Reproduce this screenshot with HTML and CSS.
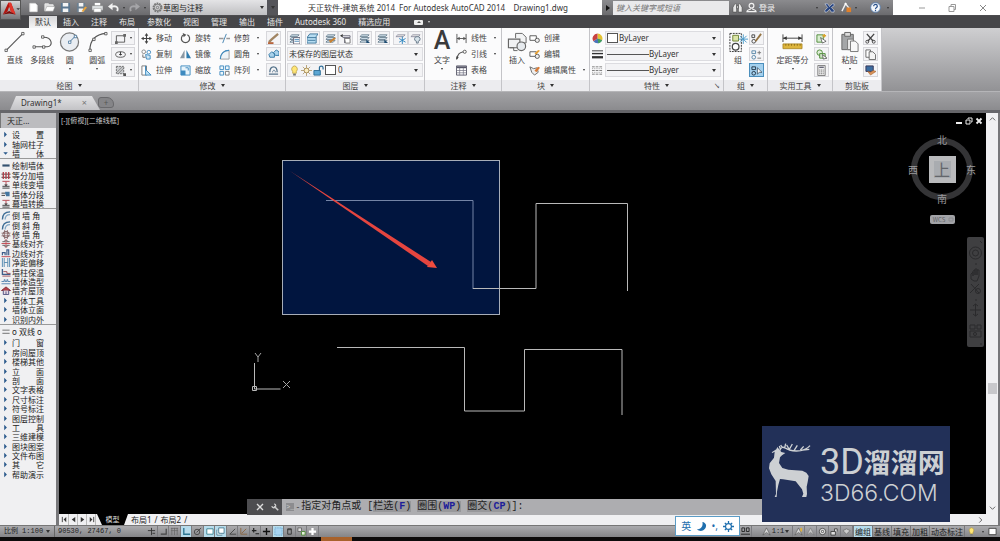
FILE: index.html
```
<!DOCTYPE html>
<html lang="zh-CN">

<head>
    <meta charset="UTF-8">
    <meta name="viewport" content="width=device-width, initial-scale=1.0">
    <title>天正软件-建筑系统 2014 For Autodesk AutoCAD 2014</title>
    <link rel="stylesheet" href="styles.css">
</head>

<body>
    <!-- Shared icons -->
    <svg class="sprite" aria-hidden="true">
        <symbol id="i-new" viewBox="0 0 12 12"><path d="M2 1.500h6l2 2v7H2z" fill="#fff" stroke="#ddd"/></symbol>
        <symbol id="i-open" viewBox="0 0 12 12"><path d="M1 10V2h4l1 1h4v2" fill="#ddd" stroke="#eee"/><path d="M1 10l2-5h9l-2 5z" fill="#fff" stroke="#888" stroke-width=".5"/></symbol>
        <symbol id="i-save" viewBox="0 0 12 12"><path d="M1 1h10v10H1z" fill="#5b7790"/><path d="M3 1h6v4H3zM3 7h6v4H3z" fill="#f4f4f4"/></symbol>
        <symbol id="i-saveas" viewBox="0 0 12 12"><path d="M1 1h9v10H1z" fill="#6b7f90"/><path d="M3 1h5v4H3zM3 7h5v4H3z" fill="#f4f4f4"/><path d="M6 10l4-5 2 1-4 5z" fill="#e8a33c"/></symbol>
        <symbol id="i-print" viewBox="0 0 12 12"><path d="M3 1h6v3H3z" fill="#fff"/><path d="M0 4h12v5H0z" fill="#dfe2e4" stroke="#777" stroke-width=".5"/><path d="M2 7h8v4H2z" fill="#fff" stroke="#888" stroke-width=".5"/></symbol>
        <symbol id="i-undo" viewBox="0 0 12 12"><path d="M10 10c2-5-2-6-6-5" fill="none" stroke="#f2f2f2" stroke-width="2"/><path d="M0 5l5-4v8z" fill="#f2f2f2"/></symbol>
        <symbol id="i-redo" viewBox="0 0 12 12"><path d="M2 10c-2-5 2-6 6-5" fill="none" stroke="#a5a5a8" stroke-width="2"/><path d="M12 5L7 1v8z" fill="#a5a5a8"/></symbol>
        <symbol id="i-gear" viewBox="0 0 12 12"><circle cx="6" cy="6" r="4.500" fill="none" stroke="#777" stroke-width="1.800" stroke-dasharray="2 .8"/><circle cx="6" cy="6" r="3.500" fill="none" stroke="#777"/><circle cx="6" cy="6" r="1.300" fill="none" stroke="#777"/></symbol>
        <symbol id="i-find" viewBox="0 0 12 12"><path d="M1 11V6l2-4h2v9zM7 11V2h2l2 4v5zM5 4h2v3H5z" fill="#e8e8e8" stroke="#444" stroke-width=".6"/></symbol>
        <symbol id="i-user" viewBox="0 0 12 12"><circle cx="6" cy="4" r="2.600" fill="none" stroke="#f2f2f2" stroke-width="1.300"/><path d="M5 7c0 2-4 1-4 3.500h10C11 8 7 9 7 7" fill="none" stroke="#f2f2f2" stroke-width="1.300"/></symbol>
        <symbol id="i-exchange" viewBox="0 0 12 12"><path d="M1 2h3l2 3 3-3h2v2L8 6l3 3v2H8L6 8l-3 3H1V9l3-3z" fill="#26437f" stroke="#e7ebf5" stroke-width=".6"/></symbol>
        <symbol id="i-a360" viewBox="0 0 12 12"><path d="M1 10L5 2l4 5" fill="none" stroke="#f0f0f0" stroke-width="1.500"/><circle cx="5" cy="2" r="1.200" fill="#fff"/><path d="M6 6h5v5H6z" fill="#e0802a"/></symbol>
        <symbol id="i-help" viewBox="0 0 12 12"><circle cx="6" cy="6" r="5.300" fill="#f3f6fa" stroke="#5a7fae"/><path d="M4 4.500c0-2.500 4-2.500 4 0 0 1.500-2 1.300-2 3M6 8.500V10" fill="none" stroke="#274f8a" stroke-width="1.300"/></symbol>

        <symbol id="i-line" viewBox="0 0 22 22"><path d="M2 20L20 2" stroke="#555" stroke-width="1.200"/><path d="M1 18.500h2.500V21H1zM18.500 1H21v2.500h-2.500z" fill="#fff" stroke="#444" stroke-width=".8"/></symbol>
        <symbol id="i-pline" viewBox="0 0 22 22"><path d="M2 16h14c6 0 6-10-4-10" fill="none" stroke="#555" stroke-width="1.200"/><path d="M1 15h2.500v2.500H1zM11 15h2.500v2.500H11zM10 4.500h2.500V7H10z" fill="#fff" stroke="#444" stroke-width=".8"/></symbol>
        <symbol id="i-circle" viewBox="0 0 22 22"><circle cx="11" cy="11" r="9.500" fill="#e9edf2" stroke="#777" stroke-width="1.300"/><path d="M11 11l6-6" stroke="#3c6d96"/><path d="M10 10h2.500v2.500H10zM16 4h2.500v2.500H16z" fill="#fff" stroke="#3c6d96" stroke-width=".8"/></symbol>
        <symbol id="i-arc" viewBox="0 0 22 22"><path d="M3 20C3 9 9 3 20 2" fill="none" stroke="#555" stroke-width="1.200"/><path d="M2 18.500h2.500V21H2zM6 7h2.500v2.500H6zM18.500 1H21v2.500h-2.500z" fill="#fff" stroke="#444" stroke-width=".8"/></symbol>
        <symbol id="i-rect" viewBox="0 0 12 12"><path d="M1.500 3h9v7h-9z" fill="none" stroke="#555"/><path d="M0 9h3v3H0zM9 1h3v3H9z" fill="#666"/></symbol>
        <symbol id="i-ellipse" viewBox="0 0 12 12"><ellipse cx="6" cy="6" rx="5.300" ry="3" fill="none" stroke="#555"/><path d="M6 3v4M4.500 6h3" stroke="#333"/></symbol>
        <symbol id="i-hatch" viewBox="0 0 12 12"><path d="M1.500 1.500h8v8h-8z" fill="#c7c9cc" stroke="#666" stroke-dasharray="2 1"/><path d="M2 8l6-6M4 9l6-6" stroke="#777" stroke-width=".8"/><path d="M9 9h3v3H9z" fill="#555"/></symbol>
        <symbol id="i-move" viewBox="0 0 12 12"><path d="M6 2v8M2 6h8" stroke="#444" stroke-width="1.200"/><path d="M6 0l2 3H4zM6 12l2-3H4zM0 6l3-2v4zM12 6L9 4v4z" fill="#444"/></symbol>
        <symbol id="i-copy" viewBox="0 0 12 12"><circle cx="3" cy="3" r="2" fill="none" stroke="#888"/><circle cx="8.500" cy="3.500" r="2" fill="none" stroke="#3d8ac0"/><path d="M5 6l5 1v4H6z" fill="#cfe6f5" stroke="#3d8ac0"/><path d="M2 6v3h3" stroke="#666" fill="none"/></symbol>
        <symbol id="i-stretch" viewBox="0 0 12 12"><path d="M1 1h5v10H1z" fill="#fff" stroke="#777"/><path d="M5 1v4l6 6H5z" fill="#bfe0f3" stroke="#3d8ac0"/></symbol>
        <symbol id="i-rotate" viewBox="0 0 12 12"><path d="M4 2a4.500 4.500 0 1 0 4 0" fill="none" stroke="#555" stroke-width="1.300"/><path d="M3 0l4 2-3 2.500z" fill="#555"/></symbol>
        <symbol id="i-mirror" viewBox="0 0 12 12"><path d="M5 1v9H0z" fill="#8a98a3"/><path d="M7 1v9h5z" fill="#2f7caf"/></symbol>
        <symbol id="i-scale" viewBox="0 0 12 12"><path d="M1 1h10v10H1z" fill="#e8f4fb" stroke="#3d8ac0"/><path d="M1 6h5v5H1z" fill="#3d8ac0"/><path d="M6 3h3v3" fill="none" stroke="#3d8ac0"/></symbol>
        <symbol id="i-trim" viewBox="0 0 12 12"><path d="M4 11L8 1" stroke="#3d7fae"/><path d="M0 6h5M8 6h4" stroke="#999" stroke-width="1.500"/></symbol>
        <symbol id="i-fillet" viewBox="0 0 12 12"><path d="M1.500 11c0-6 4-9.500 9.500-9.500V11z" fill="#eef3f7" stroke="#999"/><path d="M1.500 11c0-6 4-9.500 9.500-9.500" fill="none" stroke="#3d8ac0" stroke-width="1.300"/></symbol>
        <symbol id="i-array" viewBox="0 0 12 12"><path d="M1 1h4v4H1zM7 1h4v4H7zM1 7h4v4H1z" fill="#eef6fb" stroke="#3d8ac0"/><path d="M7 7h4v4H7z" fill="#fff" stroke="#777"/></symbol>
        <symbol id="i-erase" viewBox="0 0 12 12"><path d="M1 10l3-3 7-6" stroke="#a08462" stroke-width="2.500"/><path d="M0 11h6" stroke="#b7643c" stroke-width="2"/></symbol>
        <symbol id="i-explode" viewBox="0 0 12 12"><path d="M1 6l3-3 3 2v4H2zM6 4l3-3 3 2v4H8z" fill="#a9d2eb" stroke="#3278a5"/></symbol>
        <symbol id="i-offset" viewBox="0 0 12 12"><path d="M1 10h10M2 8c0-8 8-8 8 0" fill="none" stroke="#54728a" stroke-width="1.400"/><path d="M5 8c0-3 3-3 3 0" fill="none" stroke="#54728a"/></symbol>
        <symbol id="i-layer" viewBox="0 0 12 12"><path d="M3 2h8l-2 2H1zM3 5h8L9 7H1zM3 8h8l-2 2H1z" fill="#dcebf5" stroke="#5e7486" stroke-width=".9"/></symbol>
        <symbol id="i-layer-list" viewBox="0 0 12 12"><use href="#i-layer"/><path d="M5 5h7v7H5z" fill="#fff" stroke="#667"/><path d="M6 7h5M6 9h5" stroke="#4787b5"/></symbol>
        <symbol id="i-layer-blue" viewBox="0 0 12 12"><path d="M3 1h9l-2 3v7H0V5z" fill="#b6dcf1" stroke="#3d759a"/><path d="M0 5h10M1 8h8" stroke="#3d759a"/></symbol>
        <symbol id="i-layer-edit" viewBox="0 0 12 12"><use href="#i-layer"/><path d="M4 8l2 3 6-5-2-1-4 3z" fill="#c98232"/></symbol>
        <symbol id="i-layer-prev" viewBox="0 0 12 12"><path d="M3 3h8v2H3M5 5v6" fill="none" stroke="#667"/><path d="M5 6h6v5H6z" fill="#fff" stroke="#777"/><path d="M0 3l3-2v4z" fill="#333"/></symbol>
        <symbol id="i-layer-arrow" viewBox="0 0 12 12"><use href="#i-layer"/><path d="M8 7l4 4H8z" fill="#1f4d73"/></symbol>
        <symbol id="i-layer-freeze" viewBox="0 0 12 12"><path d="M3 2h8L9 4H1z" fill="#eee" stroke="#889" stroke-width=".9"/><path d="M8 4v8M4.500 6l7 4M11.500 6l-7 4" stroke="#2c83bd"/></symbol>
        <symbol id="i-layer-off" viewBox="0 0 12 12"><path d="M3 2h8L9 4H1z" fill="#eee" stroke="#889" stroke-width=".9"/><path d="M8 4a2.500 2.500 0 0 0-1 5v2h2V9a2.500 2.500 0 0 0-1-5z" fill="#d7e3ea" stroke="#678"/></symbol>
        <symbol id="i-bulb" viewBox="0 0 12 12"><path d="M6 1a3.500 3.500 0 0 0-2 6v2h4V7a3.500 3.500 0 0 0-2-6z" fill="#ffe676" stroke="#b59a3c" stroke-width=".8"/><path d="M4.500 9.500h3v2h-3z" fill="#777"/></symbol>
        <symbol id="i-sun" viewBox="0 0 12 12"><path d="M6 0v12M0 6h12M2 2l8 8M10 2l-8 8" stroke="#a58a55" stroke-width=".8"/><circle cx="6" cy="6" r="2.600" fill="#fbeec0" stroke="#a58a55"/></symbol>
        <symbol id="i-lock" viewBox="0 0 12 12"><path d="M1 6h7v5H1z" fill="#5ca7d4" stroke="#2d6d97"/><path d="M7 6V3c0-2.500 4-2.500 4 0v2" fill="none" stroke="#2d6d97" stroke-width="1.300"/></symbol>
        <symbol id="i-dim" viewBox="0 0 12 12"><path d="M1 1v10M11 1v10M1 6h10" stroke="#555"/><path d="M1 6l3-2v4zM11 6L8 4v4z" fill="#555"/></symbol>
        <symbol id="i-leader" viewBox="0 0 12 12"><path d="M1 11c1-6 3-7 7-8" fill="none" stroke="#555" stroke-width="1.200"/><circle cx="9.500" cy="3" r="1.700" fill="#fff" stroke="#555"/><path d="M0 12l.500-4L3 9z" fill="#444"/></symbol>
        <symbol id="i-table" viewBox="0 0 12 12"><path d="M.500 1h11v10H.500z" fill="#fff" stroke="#556"/><path d="M1 2.500h10" stroke="#556" stroke-width="2"/><path d="M4 3v8M8 3v8M1 6h10M1 8.500h10" stroke="#778" stroke-width=".8"/></symbol>
        <symbol id="i-insert" viewBox="0 0 22 22"><path d="M9 7V2h7l4 4v6h-4" fill="#f3f4f5" stroke="#666"/><path d="M1.500 8h12v9h-12z" fill="#f0f1f3" stroke="#666" stroke-width="1.200"/><circle cx="15" cy="15.500" r="4.500" fill="#e6eaee" stroke="#666" stroke-width="1.200"/><path d="M7 17v3h4M3 17h4" fill="none" stroke="#666"/></symbol>
        <symbol id="i-blk" viewBox="0 0 12 12"><path d="M1 3h7v5H1z" fill="#fff" stroke="#555"/><circle cx="9" cy="8" r="2.300" fill="#eee" stroke="#555"/></symbol>
        <symbol id="i-blk-edit" viewBox="0 0 12 12"><use href="#i-blk"/><path d="M6 5l4-4 2 1-4 4z" fill="#e69f32"/></symbol>
        <symbol id="i-blk-attr" viewBox="0 0 12 12"><path d="M1 2l4 2 4-1 1 5-4 3-3-3z" fill="#eee" stroke="#666"/><path d="M6 6l4-4 2 1-4 5z" fill="#d87a35"/></symbol>
        <symbol id="i-color" viewBox="0 0 12 12"><path d="M6 6V.500A5.500 5.500 0 0 1 11 8z" fill="#e3c231"/><path d="M6 6l5 2A5.500 5.500 0 0 1 1.500 9z" fill="#4b73ba"/><path d="M6 6L1.500 9A5.500 5.500 0 0 1 6 .5z" fill="#c74141"/><path d="M6 6l5 2a5 5 0 0 1-4 3.500z" fill="#43a15b"/></symbol>
        <symbol id="i-weight" viewBox="0 0 12 12"><path d="M0 2h12" stroke="#333"/><path d="M0 5h12" stroke="#333" stroke-width="1.500"/><path d="M0 9h12" stroke="#333" stroke-width="2.500"/></symbol>
        <symbol id="i-ltype" viewBox="0 0 12 12"><path d="M0 2h12M0 6h12M0 10h12" stroke="#777" stroke-dasharray="3 1"/><path d="M0 4h12M0 8h12" stroke="#999" stroke-dasharray="1 1"/></symbol>
        <symbol id="i-group" viewBox="0 0 22 22"><path d="M2 2h12v19H2z" fill="none" stroke="#333" stroke-dasharray="2 1"/><path d="M5 4h6v6H5z" fill="#dbe5a8" stroke="#708436"/><circle cx="8" cy="16" r="3.500" fill="#fff" stroke="#444" stroke-width="1.300"/><path d="M16 3v10M11 8h10M12.500 4.500l7 7M19.500 4.500l-7 7" stroke="#4b9ac9"/></symbol>
        <symbol id="i-grp-a" viewBox="0 0 12 12"><path d="M1 2h3v3H1z" fill="none" stroke="#444"/><circle cx="3" cy="9" r="2" fill="none" stroke="#444"/><path d="M5 9l6-8" stroke="#947443" stroke-width="2"/></symbol>
        <symbol id="i-grp-b" viewBox="0 0 12 12"><path d="M1 2h4v3H1z" fill="none" stroke="#5585a6"/><circle cx="3" cy="9" r="2" fill="none" stroke="#5585a6"/><path d="M7 4h4M9 2v4M7 10h4" stroke="#777"/></symbol>
        <symbol id="i-grp-c" viewBox="0 0 12 12"><path d="M1 2h4v3H1z" fill="none" stroke="#234"/><circle cx="3" cy="9" r="2" fill="none" stroke="#234"/><path d="M7 3v7l2-2h3z" fill="#fff" stroke="#234" stroke-width=".7"/></symbol>
        <symbol id="i-measure" viewBox="0 0 22 22"><path d="M1 3v8M21 3v8M1 7h20" stroke="#444"/><path d="M1 7l4-2v4zM21 7l-4-2v4z" fill="#333"/><path d="M1 13h20v5H1z" fill="#ddb53d" stroke="#a47f1c" stroke-width=".8"/><path d="M4 13v2M7 13v2M10 13v2M13 13v2M16 13v2M19 13v2" stroke="#76590d" stroke-width=".7"/></symbol>
        <symbol id="i-pick" viewBox="0 0 12 12"><path d="M1 2h7v8H1z" fill="#d8edcf" stroke="#4d8a37"/><path d="M5 5l6 4-4 2z" fill="#fff" stroke="#333" stroke-width=".7"/><path d="M9 1v4M7 3h4" stroke="#dca32c" stroke-width="1.500"/></symbol>
        <symbol id="i-pick2" viewBox="0 0 12 12"><circle cx="4" cy="4" r="3" fill="#ddecd6" stroke="#4d8a37"/><path d="M4 5h6v5H4z" fill="#cfe5c5" stroke="#4d8a37"/><path d="M7 6l5 4-4 1z" fill="#fff" stroke="#333" stroke-width=".7"/></symbol>
        <symbol id="i-calc" viewBox="0 0 12 12"><path d="M2 .500h8v11H2z" fill="#eee" stroke="#777"/><path d="M3.500 2.500h5" stroke="#667" stroke-width="1.500"/><path d="M3.500 5.500h5M3.500 7.500h5M3.500 9.500h5" stroke="#777" stroke-dasharray="1.200 .7"/></symbol>
        <symbol id="i-paste" viewBox="0 0 22 22"><path d="M3 3h12v16H3z" fill="#a4a6a8" stroke="#666"/><path d="M6 1h6v4H6z" fill="#ddd" stroke="#666"/><path d="M9 8h6v11H9z" fill="#eee" stroke="#777"/><path d="M12 10h5l3 3v8h-8z" fill="#f8f8f8" stroke="#777"/></symbol>
        <symbol id="i-cut" viewBox="0 0 12 12"><path d="M2 1l7 8M10 1L3 9" stroke="#444" stroke-width="1.400"/><circle cx="2.500" cy="9.500" r="1.600" fill="none" stroke="#444"/><circle cx="9.500" cy="9.500" r="1.600" fill="none" stroke="#444"/></symbol>
        <symbol id="i-pages" viewBox="0 0 12 12"><path d="M1 1h5v8H1z" fill="#fff" stroke="#666"/><path d="M4.500 3h4l3 3v5.500h-7z" fill="#f4f4f4" stroke="#666"/></symbol>
        <symbol id="i-match" viewBox="0 0 12 12"><path d="M1 1h8v6H1z" fill="#3d6da0" stroke="#335"/><path d="M3 7l3 4 6-4-3-1-3 2z" fill="#d9935a" stroke="#a45d24" stroke-width=".6"/></symbol>

        <symbol id="p-tri" viewBox="0 0 10 10"><path d="M3 2l3 3-3 3z" fill="#2b5a8c"/></symbol>
        <symbol id="p-tri-down" viewBox="0 0 10 10"><path d="M2 3.500h5L4.500 6.500z" fill="#2b5a8c"/></symbol>
        <symbol id="p-wall" viewBox="0 0 10 10"><path d="M1 5h8" stroke="#33516f" stroke-width="2.400"/></symbol>
        <symbol id="p-split" viewBox="0 0 10 10"><path d="M0 3.500h10M0 7h10" stroke="#333"/><path d="M2 1v8M5 1v8M8 1v8" stroke="#b3404a" stroke-width="1.500"/></symbol>
        <symbol id="p-conv" viewBox="0 0 10 10"><path d="M1 1.500h8M5 2v4" stroke="#b3404a"/><path d="M1 7h8M1 9h8" stroke="#333"/><path d="M3 5h4L5 7z" fill="#333"/></symbol>
        <symbol id="p-seg" viewBox="0 0 10 10"><path d="M0 3.500h4M0 6h4" stroke="#333"/><path d="M4 2h5v5H5V5H4z" fill="#4577a0"/></symbol>
        <symbol id="p-arc" viewBox="0 0 10 10"><path d="M1 9.500C1 4 4 1 9.500 1" fill="none" stroke="#3f6e97" stroke-width="1.500"/><path d="M4 9.500C4 6 6 4 9.500 4" fill="none" stroke="#83a8c6" stroke-width="1.400"/></symbol>
        <symbol id="p-cross" viewBox="0 0 10 10"><circle cx="5" cy="5" r="3.500" fill="none" stroke="#7d6a6b"/><path d="M3.500 0v10M6.500 0v10M0 3.500h10M0 6.500h10" stroke="#7d5254" stroke-width=".8"/></symbol>
        <symbol id="p-base" viewBox="0 0 10 10"><path d="M0 5h10M5 0v10" stroke="#c0434c"/><path d="M1 3h3V1M6 1v2h3M1 7h3v2M6 9V7h3" fill="none" stroke="#555"/></symbol>
        <symbol id="p-edge" viewBox="0 0 10 10"><path d="M0 8.500h10" stroke="#c0434c"/><path d="M1 7V4h3v3M6 7V1h2v6" fill="none" stroke="#3f5e8a" stroke-width="1.300"/></symbol>
        <symbol id="p-dist" viewBox="0 0 10 10"><path d="M1 0v10M3 0v10M7 0v10M9 0v10M3 5h4" stroke="#4f86ae"/></symbol>
        <symbol id="p-warm" viewBox="0 0 10 10"><path d="M1 1v6h9" fill="none" stroke="#3f5e8a" stroke-width="1.500"/><path d="M2 4h4v2h4M1 9h9" fill="none" stroke="#9b4a55"/></symbol>
        <symbol id="p-shape" viewBox="0 0 10 10"><path d="M0 7.500h10M0 5h3V3h1v2h2V3h1v2h3" fill="none" stroke="#4f7fae"/></symbol>
        <symbol id="p-house" viewBox="0 0 10 10"><path d="M0 5l5-4 5 4z" fill="#b3404a" stroke="#83262f"/><path d="M2 5v4.500h6V5" fill="#e6d9e3" stroke="#4a4b7c"/><path d="M5 6v3" stroke="#4a4b7c"/></symbol>
        <symbol id="p-double" viewBox="0 0 10 10"><path d="M1 3.500h8M1 7h8" stroke="#666"/></symbol>
    </svg>

    <!-- Title bar -->
    <header class="titlebar">
        <button class="app-button" aria-label="应用程序菜单">
            <svg viewBox="0 0 22 20"><path d="M2 15L8 2h3l5 13-5-3-2-6-2 6z" fill="#b3140f"/><path d="M8 2h3l5 13-5-3z" fill="#e2362c"/><path d="M2 15l7-4 7 4-7-1z" fill="#7d0a08"/><path d="M17 8h4l-2 2z" fill="#333"/></svg>
        </button>
        <div class="quick-access">
            <button aria-label="新建"><svg><use href="#i-new"/></svg></button>
            <button aria-label="打开"><svg><use href="#i-open"/></svg></button>
            <button aria-label="保存"><svg><use href="#i-save"/></svg></button>
            <button aria-label="另存为"><svg><use href="#i-saveas"/></svg></button>
            <button aria-label="打印"><svg><use href="#i-print"/></svg></button>
            <button aria-label="放弃"><svg><use href="#i-undo"/></svg></button>
            <i class="caret small"></i>
            <button aria-label="重做"><svg><use href="#i-redo"/></svg></button>
            <i class="caret small"></i>
        </div>
        <label class="workspace-select">
            <svg><use href="#i-gear"/></svg>
            <select aria-label="工作空间">
                <option>草图与注释</option>
            </select>
            <i class="caret"></i>
        </label>
        <button class="customize" aria-label="自定义快速访问工具栏"><i class="caret"></i></button>
        <h1 class="window-title">天正软件-建筑系统 2014&nbsp; For Autodesk AutoCAD 2014 &nbsp;&nbsp; Drawing1.dwg</h1>
        <div class="infocenter">
            <i class="caret right"></i>
            <input type="text" aria-label="搜索" placeholder="键入关键字或短语">
            <button aria-label="查找"><svg><use href="#i-find"/></svg></button>
            <button class="sign-in"><svg><use href="#i-user"/></svg>登录</button>
            <span class="spacer"></span>
            <i class="caret small"></i>
            <button class="exchange" aria-label="Exchange"><svg><use href="#i-exchange"/></svg></button>
            <button aria-label="Autodesk 360"><svg><use href="#i-a360"/></svg></button>
            <i class="caret small"></i>
            <button class="help" aria-label="帮助"><svg><use href="#i-help"/></svg></button>
            <i class="caret small"></i>
        </div>
        <div class="window-controls">
            <button aria-label="最小化"><svg viewBox="0 0 8 8"><path d="M1 4h6" stroke="#999"/></svg></button>
            <button aria-label="还原"><svg viewBox="0 0 8 8"><path d="M1 2.500h5v5H1zM3 2V.500h4.500v5H6" fill="none" stroke="#999"/></svg></button>
            <button aria-label="关闭"><svg viewBox="0 0 8 8"><path d="M1 1l6 6M7 1L1 7" stroke="#888"/></svg></button>
        </div>
    </header>

    <nav class="ribbon-tabs">
        <a href="#" class="active">默认</a>
        <a href="#">插入</a>
        <a href="#">注释</a>
        <a href="#">布局</a>
        <a href="#">参数化</a>
        <a href="#">视图</a>
        <a href="#">管理</a>
        <a href="#">输出</a>
        <a href="#">插件</a>
        <a href="#">Autodesk 360</a>
        <a href="#">精选应用</a>
        <button class="ribbon-toggle" aria-label="最小化功能区"><i class="caret up"></i></button>
        <i class="caret small"></i>
    </nav>

    <!-- Ribbon -->
    <div class="ribbon">
        <section class="panel draw">
            <div class="panel-body">
                <button class="big"><svg><use href="#i-line"/></svg>直线</button>
                <button class="big"><svg><use href="#i-pline"/></svg>多段线</button>
                <button class="big"><svg><use href="#i-circle"/></svg>圆<i class="caret small"></i></button>
                <button class="big"><svg><use href="#i-arc"/></svg>圆弧<i class="caret small"></i></button>
                <div class="stack">
                    <button class="split" aria-label="矩形"><svg><use href="#i-rect"/></svg><i class="caret small"></i></button>
                    <button class="split" aria-label="椭圆"><svg><use href="#i-ellipse"/></svg><i class="caret small"></i></button>
                    <button class="split" aria-label="图案填充"><svg><use href="#i-hatch"/></svg><i class="caret small"></i></button>
                </div>
            </div>
            <h2>绘图<i class="caret"></i></h2>
        </section>

        <section class="panel modify">
            <div class="panel-body">
                <div class="stack">
                    <button class="item"><svg><use href="#i-move"/></svg>移动</button>
                    <button class="item"><svg><use href="#i-copy"/></svg>复制</button>
                    <button class="item"><svg><use href="#i-stretch"/></svg>拉伸</button>
                </div>
                <div class="stack">
                    <button class="item"><svg><use href="#i-rotate"/></svg>旋转</button>
                    <button class="item"><svg><use href="#i-mirror"/></svg>镜像</button>
                    <button class="item"><svg><use href="#i-scale"/></svg>缩放</button>
                </div>
                <div class="stack">
                    <button class="item"><svg><use href="#i-trim"/></svg>修剪<i class="caret small"></i></button>
                    <button class="item"><svg><use href="#i-fillet"/></svg>圆角<i class="caret small"></i></button>
                    <button class="item"><svg><use href="#i-array"/></svg>阵列<i class="caret small"></i></button>
                </div>
                <div class="stack">
                    <button class="tool" aria-label="删除"><svg><use href="#i-erase"/></svg></button>
                    <button class="tool" aria-label="分解"><svg><use href="#i-explode"/></svg></button>
                    <button class="tool" aria-label="偏移"><svg><use href="#i-offset"/></svg></button>
                </div>
            </div>
            <h2>修改<i class="caret"></i></h2>
        </section>

        <section class="panel layers">
            <div class="panel-body stack">
                <div class="layer-tools">
                    <button class="tool" aria-label="图层特性"><svg><use href="#i-layer-list"/></svg></button>
                    <button class="tool" aria-label="图层状态"><svg><use href="#i-layer-blue"/></svg></button>
                    <span>
                        <button class="tool" aria-label="匹配图层"><svg><use href="#i-layer-edit"/></svg></button><button class="tool" aria-label="上一个图层"><svg><use href="#i-layer-prev"/></svg></button>
                    </span>
                    <button class="tool" aria-label="隔离"><svg><use href="#i-layer-arrow"/></svg></button>
                    <button class="tool" aria-label="取消隔离"><svg><use href="#i-layer-arrow"/></svg></button>
                    <span>
                        <button class="tool" aria-label="冻结"><svg><use href="#i-layer-freeze"/></svg></button><button class="tool" aria-label="关闭图层"><svg><use href="#i-layer-off"/></svg></button>
                    </span>
                </div>
                <label class="combo">
                    <select aria-label="图层状态列表">
                        <option>未保存的图层状态</option>
                    </select>
                    <i class="caret"></i>
                </label>
                <label class="combo layer-combo">
                    <svg><use href="#i-bulb"/></svg>
                    <svg><use href="#i-sun"/></svg>
                    <svg><use href="#i-lock"/></svg>
                    <span class="swatch"></span>
                    <select aria-label="当前图层">
                        <option>0</option>
                    </select>
                    <i class="caret"></i>
                </label>
            </div>
            <h2>图层<i class="caret"></i></h2>
        </section>

        <section class="panel annotate">
            <div class="panel-body">
                <button class="big"><b class="letter-a">A</b>文字<i class="caret small"></i></button>
                <div class="stack">
                    <button class="item"><svg><use href="#i-dim"/></svg>线性<i class="caret small"></i></button>
                    <button class="item"><svg><use href="#i-leader"/></svg>引线<i class="caret small"></i></button>
                    <button class="item"><svg><use href="#i-table"/></svg>表格</button>
                </div>
            </div>
            <h2>注释<i class="caret"></i></h2>
        </section>

        <section class="panel block">
            <div class="panel-body">
                <button class="big"><svg><use href="#i-insert"/></svg>插入</button>
                <div class="stack">
                    <button class="item"><svg><use href="#i-blk"/></svg>创建</button>
                    <button class="item"><svg><use href="#i-blk-edit"/></svg>编辑</button>
                    <button class="item"><svg><use href="#i-blk-attr"/></svg>编辑属性<i class="caret small"></i></button>
                </div>
            </div>
            <h2>块<i class="caret"></i></h2>
        </section>

        <section class="panel properties">
            <div class="panel-body stack">
                <div class="prop">
                    <svg><use href="#i-color"/></svg>
                    <label class="combo"><span class="swatch"></span><select aria-label="对象颜色"><option>ByLayer</option></select><i class="caret"></i></label>
                </div>
                <div class="prop">
                    <svg><use href="#i-weight"/></svg>
                    <label class="combo"><span class="rule"></span><select aria-label="线宽"><option>ByLayer</option></select><i class="caret"></i></label>
                </div>
                <div class="prop">
                    <svg><use href="#i-ltype"/></svg>
                    <label class="combo"><span class="rule"></span><select aria-label="线型"><option>ByLayer</option></select><i class="caret"></i></label>
                </div>
            </div>
            <h2>特性<i class="caret"></i><span class="launcher">↘</span></h2>
        </section>

        <section class="panel group">
            <div class="panel-body">
                <button class="big"><svg><use href="#i-group"/></svg>组</button>
                <div class="stack">
                    <button class="tool" aria-label="编辑组"><svg><use href="#i-grp-a"/></svg></button>
                    <button class="tool" aria-label="解除编组"><svg><use href="#i-grp-b"/></svg></button>
                    <button class="tool on" aria-label="启用组选择"><svg><use href="#i-grp-c"/></svg></button>
                </div>
            </div>
            <h2>组<i class="caret"></i></h2>
        </section>

        <section class="panel utilities">
            <div class="panel-body">
                <button class="big"><svg><use href="#i-measure"/></svg>定距等分<i class="caret small"></i></button>
                <div class="stack">
                    <button class="tool" aria-label="快速选择"><svg><use href="#i-pick"/></svg></button>
                    <button class="tool" aria-label="全部选择"><svg><use href="#i-pick2"/></svg></button>
                    <button class="tool" aria-label="计算器"><svg><use href="#i-calc"/></svg></button>
                </div>
            </div>
            <h2>实用工具<i class="caret"></i></h2>
        </section>

        <section class="panel clipboard">
            <div class="panel-body">
                <button class="big"><svg><use href="#i-paste"/></svg>粘贴<i class="caret small"></i></button>
                <div class="stack">
                    <button class="tool" aria-label="剪切"><svg><use href="#i-cut"/></svg></button>
                    <button class="tool" aria-label="复制剪裁"><svg><use href="#i-pages"/></svg></button>
                    <button class="tool" aria-label="特性匹配"><svg><use href="#i-match"/></svg></button>
                </div>
            </div>
            <h2>剪贴板</h2>
        </section>
    </div>

    <div class="doc-tabs">
        <div class="doc-tab">Drawing1*<button aria-label="关闭图形">×</button></div>
        <button class="doc-new" aria-label="新图形">+</button>
    </div>

    <main class="workspace">
        <!-- Tangent tool palette -->
        <aside class="palette">
            <h2>天正...</h2>
            <ul>
                <li><svg><use href="#p-tri"/></svg><a href="#" class="wide">设 置</a></li>
                <li><svg><use href="#p-tri"/></svg><a href="#">轴网柱子</a></li>
                <li><svg><use href="#p-tri-down"/></svg><a href="#" class="wide">墙 体</a></li>
                <li class="sep"></li>
                <li><svg><use href="#p-wall"/></svg><a href="#">绘制墙体</a></li>
                <li><svg><use href="#p-split"/></svg><a href="#">等分加墙</a></li>
                <li><svg><use href="#p-conv"/></svg><a href="#">单线变墙</a></li>
                <li><svg><use href="#p-seg"/></svg><a href="#">墙体分段</a></li>
                <li><svg><use href="#p-conv"/></svg><a href="#">幕墙转换</a></li>
                <li class="sep"></li>
                <li><svg><use href="#p-arc"/></svg><a href="#">倒 墙 角</a></li>
                <li><svg><use href="#p-arc"/></svg><a href="#">倒 斜 角</a></li>
                <li><svg><use href="#p-cross"/></svg><a href="#">修 墙 角</a></li>
                <li><svg><use href="#p-base"/></svg><a href="#">基线对齐</a></li>
                <li><svg><use href="#p-edge"/></svg><a href="#">边线对齐</a></li>
                <li><svg><use href="#p-dist"/></svg><a href="#">净距偏移</a></li>
                <li><svg><use href="#p-warm"/></svg><a href="#">墙柱保温</a></li>
                <li><svg><use href="#p-shape"/></svg><a href="#">墙体造型</a></li>
                <li><svg><use href="#p-house"/></svg><a href="#">墙齐屋顶</a></li>
                <li><svg><use href="#p-tri"/></svg><a href="#">墙体工具</a></li>
                <li><svg><use href="#p-tri"/></svg><a href="#">墙体立面</a></li>
                <li><svg><use href="#p-tri"/></svg><a href="#">识别内外</a></li>
                <li class="sep"></li>
                <li><svg><use href="#p-double"/></svg><a href="#">o 双线 o</a></li>
                <li class="sep blank"></li>
                <li><svg><use href="#p-tri"/></svg><a href="#" class="wide">门 窗</a></li>
                <li><svg><use href="#p-tri"/></svg><a href="#">房间屋顶</a></li>
                <li><svg><use href="#p-tri"/></svg><a href="#">楼梯其他</a></li>
                <li><svg><use href="#p-tri"/></svg><a href="#" class="wide">立 面</a></li>
                <li><svg><use href="#p-tri"/></svg><a href="#" class="wide">剖 面</a></li>
                <li><svg><use href="#p-tri"/></svg><a href="#">文字表格</a></li>
                <li><svg><use href="#p-tri"/></svg><a href="#">尺寸标注</a></li>
                <li><svg><use href="#p-tri"/></svg><a href="#">符号标注</a></li>
                <li><svg><use href="#p-tri"/></svg><a href="#">图层控制</a></li>
                <li><svg><use href="#p-tri"/></svg><a href="#" class="wide">工 具</a></li>
                <li><svg><use href="#p-tri"/></svg><a href="#">三维建模</a></li>
                <li><svg><use href="#p-tri"/></svg><a href="#">图块图案</a></li>
                <li><svg><use href="#p-tri"/></svg><a href="#">文件布图</a></li>
                <li><svg><use href="#p-tri"/></svg><a href="#" class="wide">其 它</a></li>
                <li><svg><use href="#p-tri"/></svg><a href="#">帮助演示</a></li>
            </ul>
        </aside>

        <div class="viewport">
            <div class="view-row">
                <div class="canvas">
                    <!-- Model space geometry, one unit per pixel -->
                    <svg class="drawing">
                        <rect x="223.500" y="47.500" width="217" height="154" fill="#01153f" stroke="#a7adb8"/>
                        <path d="M267 87.500h147v88.500" fill="none" stroke="#7484a6"/>
                        <path d="M414 175.500h63v-85h91.500V178" fill="none" stroke="#b9b9b9"/>
                        <path d="M278 234.500h127.500v63.500h60v-61.500h97.500V302" fill="none" stroke="#b9b9b9"/>
                        <path d="M231 58L372 149l-3 4z" fill="#e5453f"/>
                        <path d="M373 147l5 8-10-1z" fill="#f04c3e"/>
                        <path d="M195.500 250v26h26" fill="none" stroke="#b9b9b9"/>
                        <path d="M193.500 273.500h4v4h-4z" fill="none" stroke="#b9b9b9"/>
                        <path d="M196 240l3 4 3-4M199 244v5M224 268l7 7M231 268l-7 7" fill="none" stroke="#a5a5a5"/>
                    </svg>
                    <p class="view-label">[-][俯视][二维线框]</p>
                    <div class="mdi-controls">
                        <button aria-label="最小化视口"><svg viewBox="0 0 8 8"><path d="M1 6h6" stroke="#eee" stroke-width="2"/></svg></button>
                        <button aria-label="还原视口"><svg viewBox="0 0 8 8"><path d="M1 3h4v4H1zM3 2V1h4v4H6" fill="none" stroke="#eee"/></svg></button>
                        <button aria-label="关闭视口"><svg viewBox="0 0 8 8"><path d="M1.500 1.500l5 5M6.500 1.500l-5 5" stroke="#eee" stroke-width="1.800"/></svg></button>
                    </div>
                    <svg class="viewcube" viewBox="0 0 80 96">
                        <circle cx="40" cy="40" r="28" fill="none" stroke="#343436" stroke-width="6"/>
                        <rect x="27" y="27" width="27" height="27" fill="#b9babc"/>
                        <rect x="32" y="32" width="17" height="17" fill="#a9acb0"/>
                        <text x="40" y="47" class="cube-face">上</text>
                        <text x="40" y="15">北</text>
                        <text x="40" y="74">南</text>
                        <text x="11" y="45">西</text>
                        <text x="69" y="45">东</text>
                        <rect x="28" y="86" width="25" height="9" rx="2" fill="#a2a3a7"/>
                        <text x="37" y="93" class="wcs">WCS</text>
                        <path d="M47 89h4v3h-4z" fill="none" stroke="#8b8c90"/>
                    </svg>
                    <div class="nav-bar">
                        <svg viewBox="0 0 17 110" fill="none" stroke="#2a2a2c">
                            <circle cx="8.500" cy="16" r="6"/><circle cx="8.500" cy="16" r="3"/><path d="M8 27h2"/>
                            <path d="M4 42v-5l2-2v4-5l2-1v5-6h2v6-5h2v6l-2 5H7z"/>
                            <path d="M4 47l8 9M12 47l-9 9"/><circle cx="11" cy="54" r="2.500"/>
                            <path d="M8 63h2M8.500 67v12M3 73h11M6 69l2.500-2 2.500 2M6 77l2.500 2 2.500-2"/>
                            <path d="M3 88h5v4H3zM10 88h4v4h-4zM3 94h11v6H3z"/><circle cx="8" cy="97" r="1.500"/><path d="M13 4l2 2M13 107h2"/>
                        </svg>
                    </div>
                    <form class="command-line">
                        <div class="command-grip">
                            <button type="button" aria-label="关闭"><svg viewBox="0 0 8 8"><path d="M1 1l6 6M7 1L1 7" stroke="#ddd" stroke-width="1.400"/></svg></button>
                            <button type="button" aria-label="自定义"><svg viewBox="0 0 10 10"><path d="M4 4l5 5" stroke="#ccc" stroke-width="2"/><path d="M4 1a2.500 2.500 0 1 1-3 3" fill="none" stroke="#ccc" stroke-width="1.600"/></svg></button>
                        </div>
                        <span class="prompt-icon">&gt;_</span><span class="dash">-</span>
                        <p>指定对角点或 [<a href="#">栏选(<b>F</b>)</a> <a href="#">圈围(<b>WP</b>)</a> <a href="#">圈交(<b>CP</b>)</a>]:</p>
                    </form>
                    <div class="brand">
                        <svg viewBox="0 0 150 180" class="deer">
                            <path d="M11 25L25 16l3-7 7 9 5 6 12 3-10 7-6 6-3 17 10 15 18 5 42 3 12 6 7 10-3 18-3 14 1 22-2 9h-13l4-10-4-13-19-24-38-6-9-1-5 18-4 20-1 16H20l4-9-1-39-13-20-7-18 2-15 13-17 2-18-7 4z"/>
                            <path d="M35 20C42 2 48 12 64 18c22 6 48 3 62-13M43 11L38 3M50 12L53-1M63 18L73 0M78 20L88 4M97 18l10-11M37 15l-3-9M64 17l-8-14M104 18l20-2" class="antler"/>
                        </svg>
                        <div class="brand-text">
                            <strong>3D<span>溜溜网</span></strong>
                            <em>3D66.COM</em>
                        </div>
                    </div>
                </div>
                <div class="scroll-y">
                    <svg viewBox="0 0 8 8"><path d="M1 5.500l3-3 3 3" fill="none" stroke="#555"/></svg>
                    <i class="thumb"></i>
                    <svg viewBox="0 0 8 8"><path d="M1 2.500l3 3 3-3" fill="none" stroke="#555"/></svg>
                </div>
            </div>
            <div class="layout-row">
                <button aria-label="第一个"><svg viewBox="0 0 8 8"><path d="M1.500 1v6" stroke="#333"/><path d="M6 1v6L3 4z" fill="#333"/></svg></button>
                <button aria-label="上一个"><svg viewBox="0 0 8 8"><path d="M6 1v6L2 4z" fill="#333"/></svg></button>
                <button aria-label="下一个"><svg viewBox="0 0 8 8"><path d="M2 1v6l4-3z" fill="#333"/></svg></button>
                <button aria-label="最后一个"><svg viewBox="0 0 8 8"><path d="M6.500 1v6" stroke="#333"/><path d="M2 1v6l3-3z" fill="#333"/></svg></button>
                <a href="#" class="active">模型</a>
                <a href="#">布局1</a><i>/</i>
                <a href="#">布局2</a><i>/</i>
                <span class="scroll-x"><svg viewBox="0 0 8 8"><path d="M2.500 1l3 3-3 3" fill="none" stroke="#555"/></svg></span>
            </div>
        </div>
    </main>

    <footer class="status-bar">
        <button class="scale">比例 1:100<i class="caret"></i></button>
        <span class="coords">90530, 27467, 0</span>
        <div class="toggles">
            <button aria-label="推断约束"><svg viewBox="0 0 10 10"><path d="M5 1v8M1 4h8M6 7h3" stroke="#333"/></svg></button>
            <button aria-label="捕捉"><svg viewBox="0 0 10 10"><path d="M2 8h6V2" fill="none" stroke="#444" stroke-width="1.300"/></svg></button>
            <button aria-label="栅格"><svg viewBox="0 0 10 10"><path d="M1 1.500h8M1 4h8M2 1v8M5 1v8M8 1v8" stroke="#666" stroke-width=".8"/></svg></button>
            <button class="on" aria-label="正交"><svg viewBox="0 0 10 10"><path d="M2 1v7h7" fill="none" stroke="#2d7793" stroke-width="1.500"/></svg></button>
            <button aria-label="极轴"><svg viewBox="0 0 10 10"><circle cx="4.500" cy="5.500" r="3" fill="none" stroke="#444"/><path d="M4 6l5-5" stroke="#444"/></svg></button>
            <button class="on" aria-label="对象捕捉"><svg viewBox="0 0 10 10"><path d="M2 2h7v6H2z" fill="#fff" stroke="#34808f"/></svg></button>
            <button class="on" aria-label="三维对象捕捉"><svg viewBox="0 0 10 10"><path d="M3 1h6v6H3zM1 3v6h6" fill="#fff" stroke="#4a7c91"/></svg></button>
            <button aria-label="对象追踪"><svg viewBox="0 0 10 10"><path d="M8 2L2 8h7" fill="none" stroke="#444"/></svg></button>
            <button aria-label="动态UCS"><svg viewBox="0 0 10 10"><path d="M2 1v7h7M3 7l5-5" fill="none" stroke="#8b6642"/></svg></button>
            <button aria-label="动态输入"><svg viewBox="0 0 10 10"><path d="M3 1v5M1 4h5M5 7.500h4" stroke="#222" stroke-width="1.300"/></svg></button>
            <button aria-label="线宽"><svg viewBox="0 0 10 10"><path d="M5 1v8M1 5h8" stroke="#111" stroke-width="1.500"/></svg></button>
            <button class="on" aria-label="透明度"><svg viewBox="0 0 10 10"><path d="M1 1h8v8H1z" fill="#a9d4f1" stroke="#5b9cc6" stroke-dasharray="1 1"/></svg></button>
            <button aria-label="快捷特性"><svg viewBox="0 0 10 10"><path d="M3 2h4v6H3z" fill="none" stroke="#333"/><path d="M3 3h4" stroke="#333"/></svg></button>
            <button aria-label="选择循环"><svg viewBox="0 0 10 10"><path d="M1 1h4v4H1z" fill="#ddd" stroke="#666"/><path d="M5 5h4v4H5z" fill="#e7f2de" stroke="#4d8a37"/></svg></button>
            <button aria-label="注释监视器"><svg viewBox="0 0 10 10"><path d="M5 1v8M1 5h8" stroke="#fff" stroke-width="2.500"/></svg></button>
        </div>
        <span class="spacer"></span>
        <div class="annotation">
            <button aria-label="模型空间"><svg viewBox="0 0 10 10"><path d="M1 1h3v4H1zM6 1h3v4H6zM0 8h10" fill="none" stroke="#222"/></svg></button>
            <button class="ratio"><svg viewBox="0 0 10 10"><path d="M1 9l4-8 4 8-4-3z" fill="#ddd" stroke="#555" stroke-width=".7"/></svg>1:1<i class="caret"></i></button>
            <button aria-label="注释可见性"><svg viewBox="0 0 10 10"><path d="M1 9l4-8 4 8-4-3z" fill="#ddd" stroke="#555" stroke-width=".7"/><path d="M7 1h2v4H7z" fill="#e0b23e"/></svg></button>
            <button aria-label="自动缩放"><svg viewBox="0 0 10 10"><path d="M1 9l4-8 4 8-4-3z" fill="#ccc" stroke="#777" stroke-width=".7"/></svg></button>
            <button aria-label="切换工作空间"><svg viewBox="0 0 10 10"><circle cx="5" cy="5" r="3.500" fill="#eee" stroke="#444"/><circle cx="5" cy="5" r="1.300" fill="none" stroke="#444"/></svg></button>
            <button aria-label="锁定"><svg viewBox="0 0 10 10"><path d="M1 5h5v4H1zM5 5V2h3v3" fill="#ddd" stroke="#444"/></svg></button>
            <button aria-label="硬件加速"><svg viewBox="0 0 10 10"><path d="M1 4l4-2 4 2-4 4z" fill="#ccc" stroke="#777"/></svg></button>
        </div>
        <div class="modes">
            <button class="on">编组</button>
            <button>基线</button>
            <button>填充</button>
            <button>加粗</button>
            <button>动态标注</button>
            <button aria-label="隔离对象"><svg><use href="#i-bulb"/></svg></button>
        </div>
        <i class="caret small"></i>
        <button class="fullscreen" aria-label="全屏显示"><svg viewBox="0 0 10 10"><path d="M1 1.500h8v7H1z" fill="#fff" stroke="#444"/></svg></button>
        <div class="ime">
            <span>英</span>
            <svg viewBox="0 0 12 12"><path d="M7 1c1 5-2 8-6 8 4 4 10 1 10-4 0-2-2-4-4-4z" fill="#1f6fae"/></svg>
            <span>•,</span>
            <svg viewBox="0 0 12 12"><circle cx="6" cy="6" r="3.200" fill="none" stroke="#1f6fae" stroke-width="1.300"/><path d="M6 0v2.500M6 9.500V12M0 6h2.500M9.500 6H12M2 2l1.500 1.500M8.500 8.500L10 10M10 2L8.500 3.500M3.500 8.500L2 10" stroke="#1f6fae" stroke-width="1.400"/></svg>
        </div>
    </footer>
    <div class="taskbar"><i></i></div>
</body>

</html>
```

FILE: styles.css
```
* {
    box-sizing: border-box;
}

html,
body {
    margin: 0;
    height: 100%;
}

body {
    display: flex;
    flex-direction: column;
    overflow: hidden;
    background: #000;
    color: #444;
    font: 8px/12px "Noto Sans", "Noto Sans CJK SC", sans-serif;
}

h1,
h2,
p,
ul {
    margin: 0;
    padding: 0;
    font-size: inherit;
    font-weight: normal;
    list-style: none;
}

a {
    color: inherit;
    text-decoration: none;
}

button,
input,
select {
    margin: 0;
    padding: 0;
    border: 0;
    background: none;
    color: inherit;
    font: inherit;
    appearance: none;
}

button {
    display: flex;
    align-items: center;
    justify-content: center;
    white-space: nowrap;
}

svg {
    display: block;
    flex: none;
    width: 11px;
    height: 11px;
}

.sprite {
    position: absolute;
    width: 0;
    height: 0;
}

.spacer {
    flex: 1;
}

/* Small triangles next to menus */
.caret {
    flex: none;
    width: 0;
    height: 0;
    border: 2px solid transparent;
    border-top: 3px solid #333;
    border-bottom: 0;
}

.caret.small {
    border-width: 2px 1px 0;
}

.caret.right {
    border: 3px solid transparent;
    border-left: 4px solid #111;
    border-right: 0;
}

.caret.up {
    border-top: 0;
    border-bottom: 2px solid #555;
}

/* Title bar */
.titlebar {
    position: relative;
    flex: none;
    display: flex;
    height: 16px;
    background: linear-gradient(#8b8b8e, #6b6b6e);
    border-bottom: 1px solid #4c4c4f;
}

.app-button {
    position: absolute;
    left: 0;
    top: 0;
    z-index: 2;
    width: 21px;
    height: 20px;
    border: 1px solid #555;
    background: linear-gradient(#d5d5d7, #77777a);
}

.app-button svg {
    width: 20px;
    height: 18px;
}

.quick-access {
    display: flex;
    align-items: center;
    gap: 5px;
    width: 150px;
    padding-left: 28px;
}

.quick-access .caret {
    margin: 0 -1px;
}

.workspace-select {
    display: flex;
    align-items: center;
    width: 117px;
    padding: 0 3px 0 2px;
    background: linear-gradient(#e4e4e6, #bfbfc2);
    color: #222;
}

.workspace-select select {
    flex: 1;
}

.customize {
    width: 11px;
    background: #55555a;
}

.window-title {
    flex: 1;
    padding-left: 30px;
    background: #fff;
    color: #333;
    line-height: 15px;
    white-space: pre;
}

.infocenter {
    display: flex;
    align-items: center;
    gap: 3px;
    width: 291px;
    padding: 0 4px;
    color: #eee;
}

.infocenter input {
    width: 116px;
    height: 14px;
    padding-left: 3px;
    background: #e9e9eb;
    color: #666;
    font-style: italic;
}

.infocenter input::placeholder {
    color: #777;
}

.sign-in {
    gap: 2px;
}

.exchange {
    margin: 0 3px;
}

.help {
    margin: 0 3px 0 10px;
}

.window-controls {
    display: flex;
    justify-content: space-around;
    width: 107px;
    background: #fff;
    padding: 0 2px 0 14px;
}

.window-controls svg {
    width: 8px;
    height: 8px;
}

/* Ribbon tabs */
.ribbon-tabs {
    flex: none;
    display: flex;
    align-items: center;
    height: 12px;
    padding-left: 29px;
    background: #464649;
    color: #e6e6e6;
}

.ribbon-tabs a {
    padding: 0 6px;
}

.ribbon-tabs .active {
    background: linear-gradient(#d6d6d8, #f4f4f5);
    color: #333;
}

.ribbon-toggle {
    width: 9px;
    height: 5px;
    margin: 0 5px 0 18px;
    border-radius: 1px;
    background: #eee;
}

.ribbon-tabs > .caret {
    border-top-color: #ddd;
}

/* Ribbon */
.ribbon {
    flex: none;
    display: flex;
    background: linear-gradient(#cfcfd1, #929295);
    border-bottom: 1px solid #b5b5b8;
}

.panel {
    border-right: 1px solid #c4c4c8;
    background: #fbfbfc;
}

.panel h2 {
    position: relative;
    display: flex;
    align-items: center;
    justify-content: center;
    gap: 5px;
    height: 11px;
    background: #ececef;
}

.panel-body {
    display: flex;
    height: 52px;
    padding: 2px 3px;
}

.stack {
    display: flex;
    flex-direction: column;
}

.stack > * {
    flex: none;
    height: 16px;
}

.big {
    flex-direction: column;
    justify-content: flex-start;
    flex: 1;
}

.big svg {
    width: 21px;
    height: 24px;
}

.big .caret {
    margin-top: 2px;
}

.letter-a {
    height: 24px;
    font: 500 25px/22px Roboto, sans-serif;
    color: #3a3a3c;
}

.item {
    justify-content: flex-start;
    gap: 4px;
}

.item .caret {
    margin-left: 3px;
}

.tool,
.split {
    height: 14px;
    border: 1px solid #d7d7db;
    background: #f4f4f6;
}

.tool {
    width: 15px;
}

.split {
    width: 24px;
    gap: 4px;
}

.stack > .tool,
.stack > .split,
.stack > .combo {
    height: 14px;
    margin: 1px 0;
}

.tool.on {
    border-color: #4b8fbd;
    background: #a3d0ee;
}

.draw {
    width: 139px;
}

.draw .panel-body {
    padding-left: 1px;
}

.modify {
    width: 147px;
}

.modify .panel-body {
    padding-left: 2px;
}

.modify .stack:nth-child(-n+2) {
    width: 39px;
}

.modify .stack:nth-child(3) {
    width: 47px;
}

.layers {
    width: 139px;
}

.layers .panel-body {
    padding: 2px 1px;
}

.layer-tools {
    display: flex;
    justify-content: space-between;
    align-items: center;
}

.layer-tools span {
    display: flex;
}

.combo {
    display: flex;
    align-items: center;
    padding: 0 4px 0 1px;
    border: 1px solid #dcdce0;
    background: #f3f3f5;
}

.combo select {
    flex: 1;
    min-width: 0;
}

.layer-combo {
    gap: 1px;
}

.swatch {
    width: 11px;
    height: 10px;
    margin-right: 1px;
    border: 1px solid #555;
    background: #fff;
}

.annotate {
    width: 77px;
}

.annotate .stack {
    width: 42px;
}

.block {
    width: 88px;
}

.block .stack {
    width: 57px;
}

.properties {
    width: 134px;
}

.properties .panel-body {
    padding: 2px;
}

.prop {
    display: flex;
    align-items: center;
    gap: 2px;
}

.prop .combo {
    flex: 1;
    height: 14px;
}

.rule {
    width: 42px;
    height: 1px;
    background: #555;
}

.combo,
.prop {
    color: #333;
}

.launcher {
    position: absolute;
    right: 3px;
    font-size: 6px;
}

.group {
    width: 44px;
}

.utilities {
    width: 65px;
}

.clipboard {
    width: 49px;
}

/* Drawing file tabs */
.doc-tabs {
    flex: none;
    display: flex;
    align-items: flex-end;
    height: 21px;
    padding-left: 10px;
    background: linear-gradient(#a2a2a5, #8b8b8e);
    border-bottom: 3px solid #66666a;
}

.doc-tab {
    display: flex;
    justify-content: space-between;
    width: 90px;
    padding: 0 13px 0 11px;
    background: linear-gradient(#e2e2e4, #c3c3c6);
    clip-path: polygon(6px 0, 82px 0, 90px 100%, 0 100%);
    color: #333;
    line-height: 14px;
}

.doc-tab button {
    color: #777;
    font-size: 9px;
}

.doc-new {
    width: 16px;
    height: 11px;
    margin: 0 0 2px -2px;
    border: 1px solid #69696c;
    border-radius: 3px 7px 3px 3px;
    background: #858588;
    color: #555;
}

/* Main area */
.workspace {
    flex: 1;
    display: flex;
    min-height: 0;
    padding-right: 2px;
    background: #77777a;
}

.palette {
    display: flex;
    flex-direction: column;
    width: 56px;
    margin-right: 3px;
    background: #f0f0f2;
    color: #222;
}

.palette h2 {
    height: 15px;
    padding-left: 6px;
    border-left: 1px solid #777;
    background: #bcbcbf;
    line-height: 16px;
}

.palette ul {
    flex: 1;
    display: flex;
    flex-direction: column;
    margin-top: 2px;
    padding-bottom: 46px;
}

.palette li {
    flex: 1;
    display: flex;
    align-items: center;
    gap: 1px;
    padding-left: 1px;
    line-height: 9px;
}

.palette svg {
    width: 10px;
    height: 9px;
}

.palette .sep {
    flex: none;
    height: 3px;
    border-top: 1px solid #999;
}

.palette .sep.blank {
    height: 2px;
    border: 0;
}

.palette .wide {
    width: 32px;
    text-align-last: justify;
}

.viewport {
    flex: 1;
    display: flex;
    flex-direction: column;
    min-width: 0;
}

.view-row {
    flex: 1;
    display: flex;
    min-height: 0;
}

.canvas {
    position: relative;
    flex: 1;
    background: #000;
}

.drawing {
    position: absolute;
    left: 0;
    top: 0;
    width: 100%;
    height: 100%;
}

.view-label {
    position: absolute;
    left: 2px;
    top: 2px;
    color: #ccc;
    font-size: 7px;
}

.mdi-controls {
    position: absolute;
    right: 3px;
    top: 4px;
    display: flex;
    gap: 2px;
}

.mdi-controls svg {
    width: 8px;
    height: 8px;
}

.viewcube {
    position: absolute;
    right: 4px;
    top: 16px;
    width: 80px;
    height: 96px;
    font: 10px "Noto Sans CJK SC", sans-serif;
}

.viewcube text {
    fill: #9a9a9c;
    text-anchor: middle;
}

.viewcube .cube-face {
    fill: #63666b;
    font-size: 16px;
}

.viewcube .wcs {
    fill: #606166;
    font-size: 6px;
}

.nav-bar {
    position: absolute;
    right: 2px;
    top: 124px;
    border-radius: 2px;
    background: #3f3f41;
}

.nav-bar svg {
    width: 17px;
    height: 110px;
}

/* Command line floats above the drawing */
.command-line {
    position: absolute;
    left: 188px;
    right: 100px;
    bottom: -1px;
    z-index: 1;
    display: flex;
    align-items: center;
    height: 16px;
    background: #adadb0;
    color: #222;
    font: 10px/12px "Liberation Mono", "Noto Sans CJK SC", monospace;
    white-space: pre;
}

.command-grip {
    display: flex;
    align-self: stretch;
    gap: 7px;
    width: 35px;
    padding-left: 9px;
    background: #4d4d50;
}

.command-grip svg {
    width: 8px;
    height: 8px;
}

.prompt-icon {
    margin-left: 4px;
    background: #8c8c8f;
    color: #ccc;
    font-size: 7px;
    line-height: 8px;
}

.dash {
    margin: 0 1px;
    font-size: 8px;
}

.command-line a {
    background: #98989b;
}

.command-line b {
    color: #1c1c9a;
}

/* Watermark logo */
.brand {
    position: absolute;
    right: 36px;
    bottom: -8px;
    z-index: 2;
    display: flex;
    width: 188px;
    height: 96px;
    padding: 18px 0 0 6px;
    background: #223058;
}

.deer {
    width: 50px;
    height: 60px;
    fill: #cdd0d3;
    overflow: visible;
}

.deer .antler {
    fill: none;
    stroke: #cdd0d3;
    stroke-width: 4;
}

.brand-text {
    margin-left: 2px;
    color: #cdd0d3;
    white-space: nowrap;
}

.brand-text strong {
    display: flex;
    align-items: center;
    font: 36px/36px Roboto, sans-serif;
}

.brand-text span {
    font: bold 27px/36px "Noto Sans CJK SC", sans-serif;
}

.brand-text em {
    display: block;
    font: 300 23px/26px Inter, sans-serif;
}

.scroll-y {
    display: flex;
    flex-direction: column;
    align-items: center;
    width: 12px;
    padding: 2px 0;
    background: #f0f0f2;
}

.scroll-y svg,
.scroll-x svg {
    width: 7px;
    height: 8px;
}

.scroll-y .thumb {
    width: 9px;
    height: 11px;
    margin: auto 0 110px;
    background: #c8c8cb;
}

.layout-row {
    flex: none;
    display: flex;
    align-items: center;
    height: 11px;
    padding-left: 1px;
    background: #f0f0f2;
    color: #222;
    line-height: 11px;
}

.layout-row button {
    width: 9px;
    height: 11px;
    border-right: 1px solid #bbb;
}

.layout-row button svg {
    width: 7px;
    height: 7px;
}

.layout-row a {
    padding: 0 3px;
}

.layout-row .active {
    width: 31px;
    margin-left: 1px;
    background: #000;
    clip-path: polygon(0 0, 100% 0, 27px 100%, 5px 100%);
    color: #ddd;
    font-size: 7px;
    text-align: center;
}

.layout-row i {
    font-style: normal;
}

.scroll-x {
    margin-left: auto;
    padding-right: 14px;
}

/* Status bar */
.status-bar {
    position: relative;
    flex: none;
    display: flex;
    align-items: center;
    height: 12px;
    padding-right: 3px;
    border-top: 1px solid #777;
    background: linear-gradient(#ababae, #858588);
    color: #222;
    line-height: 11px;
}

.status-bar svg {
    width: 9px;
    height: 9px;
}

.scale,
.coords,
.ratio {
    font: 7px/11px "Liberation Mono", "Noto Sans CJK SC", monospace;
}

.scale {
    gap: 3px;
    width: 55px;
    height: 11px;
    border-right: 1px solid #666;
}

.coords {
    width: 91px;
    padding-left: 3px;
    white-space: pre;
}

.toggles,
.annotation,
.modes {
    display: flex;
}

.toggles button,
.annotation button {
    width: 12px;
    height: 11px;
    border-right: 1px solid #7c7c80;
}

.toggles button:nth-child(even) {
    width: 11px;
}

.status-bar .on {
    background: #b7dcec;
}

.annotation .ratio {
    gap: 1px;
    width: 34px;
    margin-left: 7px;
}

.modes button {
    height: 11px;
    padding: 0 1px;
    border-left: 1px solid #77777a;
}

.modes button:last-child {
    width: 14px;
}

.fullscreen {
    margin-left: 4px;
}

.status-bar > .caret {
    margin-left: 4px;
}

.ime {
    position: absolute;
    left: 675px;
    bottom: 1px;
    z-index: 3;
    display: flex;
    align-items: center;
    justify-content: space-around;
    width: 65px;
    height: 20px;
    padding: 0 3px;
    border: 1px solid #5b9cc6;
    background: #fff;
    color: #1f6fae;
    font-size: 10px;
}

.ime svg {
    width: 11px;
    height: 11px;
}

.taskbar {
    flex: none;
    height: 4px;
    padding-left: 321px;
    background: #0d0b0b;
}

.taskbar i {
    display: block;
    width: 31px;
    height: 4px;
    background: #a8622c;
}
```
